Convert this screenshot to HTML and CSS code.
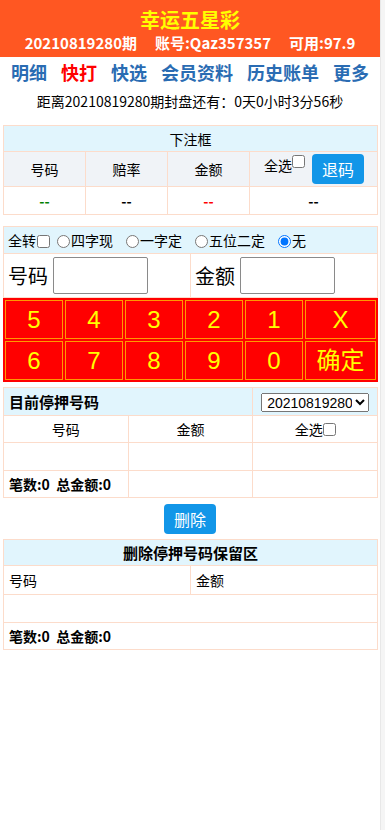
FILE: index.html
```html
<!DOCTYPE html>
<html lang="zh">
<head>
<meta charset="utf-8">
<title>幸运五星彩</title>
<link rel="stylesheet" href="styles.css">
</head>
<body>
<div class="page">
  <header class="top">
    <div class="title">幸运五星彩</div>
    <div class="info"><span>20210819280期</span><span>账号:Qaz357357</span><span>可用:97.9</span></div>
  </header>
  <nav class="nav">
    <a>明细</a><a class="on">快打</a><a>快选</a><a>会员资料</a><a>历史账单</a><a>更多</a>
  </nav>
  <div class="countdown">距离20210819280期封盘还有：0天0小时3分56秒</div>

  <table class="box bet">
    <colgroup><col class="n"><col class="n"><col class="n"><col></colgroup>
    <tr class="cap"><td colspan="4">下注框</td></tr>
    <tr class="head">
      <td>号码</td><td>赔率</td><td>金额</td>
      <td class="c4"><span class="sel">全选<input type="checkbox"></span><button class="btn">退码</button></td>
    </tr>
    <tr class="vals">
      <td class="green">--</td><td>--</td><td class="red">--</td><td>--</td>
    </tr>
  </table>

  <table class="box entry">
    <tr class="opts"><td colspan="2">
      <label class="first">全转<input type="checkbox"></label><label class="r1"><input type="radio" name="m">四字现</label><label class="r"><input type="radio" name="m">一字定</label><label class="r"><input type="radio" name="m">五位二定</label><label class="r"><input type="radio" name="m" checked>无</label>
    </td></tr>
    <tr class="inputs">
      <td><span class="lbl">号码</span><input class="field" type="text"></td>
      <td><span class="lbl">金额</span><input class="field" type="text"></td>
    </tr>
  </table>

  <table class="keys">
    <tr><td>5</td><td>4</td><td>3</td><td>2</td><td>1</td><td class="wide">X</td></tr>
    <tr><td>6</td><td>7</td><td>8</td><td>9</td><td>0</td><td class="wide">确定</td></tr>
  </table>

  <table class="box hold">
    <colgroup><col><col><col></colgroup>
    <tr class="cap left"><td colspan="2">目前停押号码</td><td class="selcell"><select><option>20210819280</option></select></td></tr>
    <tr class="cols"><td>号码</td><td>金额</td><td>全选<input type="checkbox"></td></tr>
    <tr class="empty"><td></td><td></td><td></td></tr>
    <tr class="foot"><td>笔数:0&nbsp;&nbsp;总金额:0</td><td></td><td></td></tr>
  </table>

  <div class="center"><button class="btn">删除</button></div>

  <table class="box keep">
    <tr class="cap bold"><td colspan="2">删除停押号码保留区</td></tr>
    <tr class="cols2"><td>号码</td><td>金额</td></tr>
    <tr class="empty"><td colspan="2"></td></tr>
    <tr class="foot"><td colspan="2">笔数:0&nbsp;&nbsp;总金额:0</td></tr>
  </table>
</div>
</body>
</html>
```

FILE: styles.css
```css
html, body {
  margin: 0;
  padding: 0;
  background: #f5f5f5;
}
body {
  font-family: "Noto Sans CJK SC", "Noto Sans", sans-serif;
  font-size: 14px;
  color: #000;
}
.page {
  width: 381px;
  min-height: 830px;
  background: #fff;
  border-right: 1px solid #e8e8e8;
  box-sizing: border-box;
  overflow: hidden;
}
.top {
  background: #ff5722;
  height: 57px;
  text-align: center;
  font-weight: bold;
  box-sizing: border-box;
  padding-top: 7px;
}
.title {
  color: #ffff00;
  font-size: 20px;
  line-height: 26px;
}
.info {
  color: #fff;
  font-size: 15px;
  line-height: 20px;
  display: flex;
  justify-content: center;
  gap: 18px;
}
.nav {
  display: flex;
  justify-content: center;
  gap: 14px;
  padding-top: 2px;
  height: 27px;
  line-height: 26px;
  font-size: 18px;
  font-weight: bold;
}
.nav a { color: #2a6cb3; }
.nav a.on { color: #ff0000; }
.countdown {
  text-align: center;
  font-size: 14px;
  line-height: 20px;
  margin-top: 5px;
  height: 34px;
}
table {
  border-collapse: collapse;
  width: 375px;
  margin: 0 3px;
  table-layout: fixed;
}
.box td {
  border: 1px solid #fcdccb;
  padding: 0;
  text-align: center;
  line-height: 20px;
}
.bet col.n { width: 82px; }
.cap td {
  background: #e1f5fd;
  height: 25px;
}
.cap.left td { text-align: left; padding-left: 5px; font-weight: bold; font-size: 15px; height: 27px; }
.cap.left td.selcell { text-align: center; padding: 0; }
.cap.bold td { font-weight: bold; font-size: 15px; }
.bet .head td {
  background: #f0f3f7;
  height: 34px;
  white-space: nowrap;
}
.bet .head td.c4 { text-align: left; padding-left: 14px; }
.sel { vertical-align: middle; position: relative; top: -4px; }
.sel input { margin: 0 7px 0 0; vertical-align: top; position: relative; top: 3px; }
.btn {
  background: #1296e8;
  color: #fff;
  border: 0;
  border-radius: 4px;
  font-family: "Noto Sans CJK SC", sans-serif;
  font-size: 16px;
  width: 52px;
  height: 30px;
  padding: 0;
  vertical-align: middle;
}
.bet .vals td {
  height: 27px;
  font-weight: bold;
  font-size: 14px;
}
.green { color: #008000; }
.red { color: #ff0000; }
.entry { margin-top: 11px; }
.opts td {
  background: #e1f5fd;
  text-align: left;
  height: 26px;
  padding-left: 4px;
  font-size: 14px;
  white-space: nowrap;
}
.opts input { margin: 0 1px 0 0; vertical-align: -2px; }
.opts input[type=checkbox] { margin: 0 0 0 1px; }
.opts label.r1 { margin-left: 7px; }
.opts label.r { margin-left: 13px; }
.inputs td {
  text-align: left;
  height: 43px;
  padding-left: 4px;
}
.lbl { font-size: 20px; vertical-align: middle; }
.field {
  width: 95px;
  height: 37px;
  box-sizing: border-box;
  border: 1px solid #8a8a8a;
  border-radius: 2px;
  margin-left: 5px;
  vertical-align: middle;
}
.keys {
  background: #ff0000;
  border-collapse: separate;
  border-spacing: 2px;
  width: 375px;
  table-layout: auto;
  padding: 0;
}
.keys td {
  border: 1px solid #ff9900;
  background: #ff0000;
  color: #ffff00;
  text-align: center;
  font-family: "Liberation Sans", "Noto Sans CJK SC", sans-serif;
  font-size: 24px;
  line-height: 28px;
  height: 37px;
  padding: 0;
  width: 56px;
}
.keys td.wide { width: 69px; }
.hold { margin-top: 5px; }
.hold select {
  font-family: "Liberation Sans", "Noto Sans CJK SC", sans-serif;
  font-size: 14px;
  width: 108px;
  height: 19px;
  padding: 0 0 0 1px;
  color: #000;
  vertical-align: middle;
}
.cols td { height: 26px; }
.cols input { margin: 0; vertical-align: -1px; }
.empty td { height: 27px; }
.foot td {
  height: 26px;
  text-align: left;
  padding-left: 5px;
  font-weight: bold;
  white-space: nowrap;
  overflow: visible;
}
.center { text-align: center; padding: 6px 0 5px; line-height: 0; }
.keep .cols2 td { height: 28px; text-align: left; padding-left: 5px; }
```
